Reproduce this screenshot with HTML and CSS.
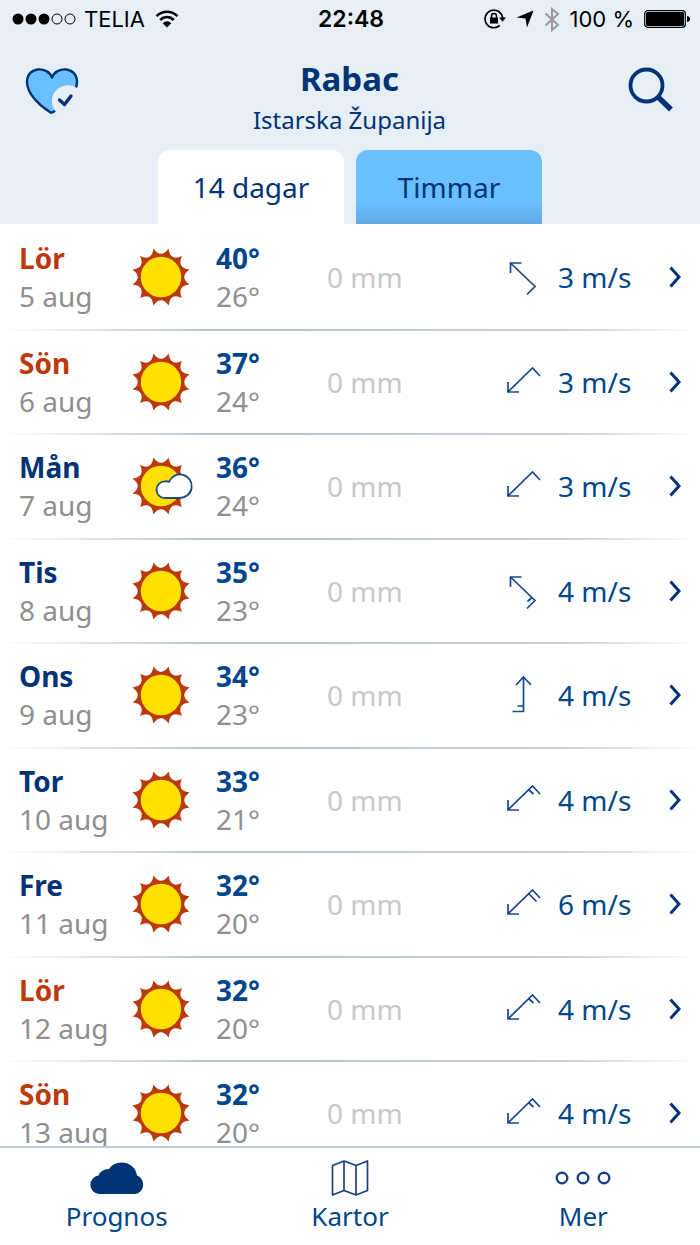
FILE: index.html
```html
<!DOCTYPE html>
<html lang="sv">

<head>
    <meta charset="UTF-8">
    <meta name="viewport" content="width=device-width, initial-scale=1.0">
    <title>Rabac - Prognos</title>
    <link rel="stylesheet" href="styles.css">
</head>

<body>
    <!-- Shared icons -->
    <svg class="sprite" aria-hidden="true">
        <symbol id="sun" viewBox="-30 -30 60 60">
            <path fill="#bb3a0b" d="M28.5 7.6Q15.6 9 20.9 20.9Q9 15.6 7.6 28.5Q0 18 -7.6 28.5Q-9 15.6 -20.9 20.9Q-15.6 9 -28.5 7.6Q-18 0 -28.5 -7.6Q-15.6 -9 -20.9 -20.9Q-9 -15.6 -7.6 -28.5Q0 -18 7.6 -28.5Q9 -15.6 20.9 -20.9Q15.6 -9 28.5 -7.6Q18 0 28.5 7.6Z"/>
            <circle r="20.2" fill="#ffe000"/>
        </symbol>
        <symbol id="wind-nw-3" viewBox="0 0 40 40">
            <path d="M7.5 16V6H18.5M7.5 6L32 29.5L24 37.5"/>
        </symbol>
        <symbol id="wind-nw-4" viewBox="0 0 40 40">
            <path d="M7.5 16V6H18.5M7.5 6L32 29.5L24 37.5M29 26.5L24.5 30.5"/>
        </symbol>
        <symbol id="wind-sw-3" viewBox="0 0 40 40">
            <path d="M5 20V30H16M5 30L29.5 6L37 14"/>
        </symbol>
        <symbol id="wind-sw-4" viewBox="0 0 40 40">
            <path d="M5 20V30H16M5 30L29.5 6L37 14M25.5 9.5L30.5 14"/>
        </symbol>
        <symbol id="wind-sw-6" viewBox="0 0 40 40">
            <path d="M5 20V30H16M5 30L29.5 6L37 14M25.5 9.5L33.5 17.5"/>
        </symbol>
        <symbol id="wind-n-4" viewBox="0 0 40 40">
            <path d="M13 10L20.5 2L28 10M20.5 2V36.5H9.5M20.5 31H14.5"/>
        </symbol>
        <symbol id="chevron" viewBox="0 0 14 24">
            <path d="M1.5 2.5L10 12L1.5 21.5"/>
        </symbol>
    </svg>

    <div class="app">
        <header class="top">
            <div class="status">
                <div class="status-left">
                    <svg width="64" height="12" viewBox="0 0 64 12" aria-hidden="true">
                        <circle cx="6" cy="6" r="5.5"/>
                        <circle cx="19" cy="6" r="5.5"/>
                        <circle cx="32" cy="6" r="5.5"/>
                        <circle cx="45" cy="6" r="5" fill="none" stroke="#000"/>
                        <circle cx="58" cy="6" r="5" fill="none" stroke="#000"/>
                    </svg>
                    <span>TELIA</span>
                    <svg width="24" height="18" viewBox="0 0 24 18" aria-hidden="true">
                        <path fill="none" stroke="#000" stroke-width="2.6" d="M1.5 6.2C7.5 .2 16.5 .2 22.5 6.2M5.2 10C9 6 15 6 18.8 10"/>
                        <path d="M12 17.5L7.7 13.2Q12 9.5 16.3 13.2Z"/>
                    </svg>
                </div>
                <time class="clock">22:48</time>
                <div class="status-right">
                    <svg width="22" height="20" viewBox="0 0 22 20" aria-hidden="true">
                        <path fill="none" stroke="#000" stroke-width="1.7" d="M15.7 16.5A8.8 8.8 0 1 1 18.6 9"/>
                        <path d="M15 8.5H22L18.5 12.7Z"/>
                        <rect x="6" y="8.5" width="8" height="6"/>
                        <path fill="none" stroke="#000" stroke-width="1.5" d="M7.5 9V7A2.5 2.5 0 0 1 12.5 7V9"/>
                    </svg>
                    <svg width="18" height="18" viewBox="0 0 18 18" aria-hidden="true">
                        <path d="M17.5 .5L11 17.5L9.5 8.5L.5 7.5Z"/>
                    </svg>
                    <svg width="16" height="25" viewBox="0 0 16 25" aria-hidden="true">
                        <path fill="none" stroke="#999" stroke-width="2" d="M1.5 6.5L14 18L8 23V2L14 7L1.5 18.5"/>
                    </svg>
                    <span>100 %</span>
                    <svg width="46" height="18" viewBox="0 0 46 18" aria-hidden="true">
                        <rect x=".7" y=".7" width="40.6" height="16.6" rx="3" fill="none" stroke="#000" stroke-width="1.2"/>
                        <rect x="2" y="2" width="38" height="14" rx="1.5"/>
                        <path d="M43 6Q46 6.5 46 9T43 12Z"/>
                    </svg>
                </div>
            </div>

            <div class="place">
                <button class="icon-button" type="button" aria-label="Favorit">
                    <svg width="54" height="48" viewBox="0 0 54 48">
                        <path fill="#69bfff" stroke="#003375" stroke-width="2.4" stroke-linejoin="round" d="M27 10.5C23 -1 2 -1 2 15C2 27 15 39 25.5 45.5Q27 46 29 44.5C40 37 52 27 52 15C52 -1 31 -1 27 10.5Z"/>
                        <path fill="#e6eff6" d="M54 22.5A13.5 13.500 0 1 0 32 46L54 46Z"/>
                        <path fill="none" stroke="#003375" stroke-width="3.4" stroke-linecap="round" stroke-linejoin="round" d="M34.5 33L39.5 37.5L46 29"/>
                    </svg>
                </button>
                <div class="place-name">
                    <h1>Rabac</h1>
                    <p>Istarska Županija</p>
                </div>
                <button class="icon-button search" type="button" aria-label="Sök">
                    <svg width="46" height="46" viewBox="0 0 46 46" fill="none" stroke="#003375">
                        <circle cx="18.5" cy="18.5" r="16" stroke-width="3.8"/>
                        <path stroke-width="5.4" d="M29.5 29.5L43 42.5"/>
                    </svg>
                </button>
            </div>

            <div class="tabs" role="tablist">
                <button class="tab active" type="button" role="tab" aria-selected="true">14 dagar</button>
                <button class="tab" type="button" role="tab" aria-selected="false">Timmar</button>
            </div>
        </header>

        <main class="forecast">
            <ul class="days">
                <li><a class="day" href="#">
                    <div class="date"><strong class="weekend">Lör</strong><span>5 aug</span></div>
                    <svg class="weather"><use href="#sun"/></svg>
                    <div class="temp"><strong>40°</strong><span>26°</span></div>
                    <span class="rain">0 mm</span>
                    <svg class="wind"><use href="#wind-nw-3"/></svg>
                    <span class="speed">3 m/s</span>
                    <svg class="chevron"><use href="#chevron"/></svg>
                </a></li>
                <li><a class="day" href="#">
                    <div class="date"><strong class="weekend">Sön</strong><span>6 aug</span></div>
                    <svg class="weather"><use href="#sun"/></svg>
                    <div class="temp"><strong>37°</strong><span>24°</span></div>
                    <span class="rain">0 mm</span>
                    <svg class="wind"><use href="#wind-sw-3"/></svg>
                    <span class="speed">3 m/s</span>
                    <svg class="chevron"><use href="#chevron"/></svg>
                </a></li>
                <li><a class="day" href="#">
                    <div class="date"><strong>Mån</strong><span>7 aug</span></div>
                    <svg class="weather" viewBox="-30 -30 60 60">
                        <use href="#sun" x="-30" y="-30" width="60" height="60"/>
                        <path fill="#fff" stroke="#1d4a8a" stroke-width="1.8" d="M3.8 12A8.3 8.3 0 0 1 3.8 -4.6Q6 -5 8 -4.2A11.8 11.8 0 1 1 18.5 12Z"/>
                    </svg>
                    <div class="temp"><strong>36°</strong><span>24°</span></div>
                    <span class="rain">0 mm</span>
                    <svg class="wind"><use href="#wind-sw-3"/></svg>
                    <span class="speed">3 m/s</span>
                    <svg class="chevron"><use href="#chevron"/></svg>
                </a></li>
                <li><a class="day" href="#">
                    <div class="date"><strong>Tis</strong><span>8 aug</span></div>
                    <svg class="weather"><use href="#sun"/></svg>
                    <div class="temp"><strong>35°</strong><span>23°</span></div>
                    <span class="rain">0 mm</span>
                    <svg class="wind"><use href="#wind-nw-4"/></svg>
                    <span class="speed">4 m/s</span>
                    <svg class="chevron"><use href="#chevron"/></svg>
                </a></li>
                <li><a class="day" href="#">
                    <div class="date"><strong>Ons</strong><span>9 aug</span></div>
                    <svg class="weather"><use href="#sun"/></svg>
                    <div class="temp"><strong>34°</strong><span>23°</span></div>
                    <span class="rain">0 mm</span>
                    <svg class="wind"><use href="#wind-n-4"/></svg>
                    <span class="speed">4 m/s</span>
                    <svg class="chevron"><use href="#chevron"/></svg>
                </a></li>
                <li><a class="day" href="#">
                    <div class="date"><strong>Tor</strong><span>10 aug</span></div>
                    <svg class="weather"><use href="#sun"/></svg>
                    <div class="temp"><strong>33°</strong><span>21°</span></div>
                    <span class="rain">0 mm</span>
                    <svg class="wind"><use href="#wind-sw-4"/></svg>
                    <span class="speed">4 m/s</span>
                    <svg class="chevron"><use href="#chevron"/></svg>
                </a></li>
                <li><a class="day" href="#">
                    <div class="date"><strong>Fre</strong><span>11 aug</span></div>
                    <svg class="weather"><use href="#sun"/></svg>
                    <div class="temp"><strong>32°</strong><span>20°</span></div>
                    <span class="rain">0 mm</span>
                    <svg class="wind"><use href="#wind-sw-6"/></svg>
                    <span class="speed">6 m/s</span>
                    <svg class="chevron"><use href="#chevron"/></svg>
                </a></li>
                <li><a class="day" href="#">
                    <div class="date"><strong class="weekend">Lör</strong><span>12 aug</span></div>
                    <svg class="weather"><use href="#sun"/></svg>
                    <div class="temp"><strong>32°</strong><span>20°</span></div>
                    <span class="rain">0 mm</span>
                    <svg class="wind"><use href="#wind-sw-4"/></svg>
                    <span class="speed">4 m/s</span>
                    <svg class="chevron"><use href="#chevron"/></svg>
                </a></li>
                <li><a class="day" href="#">
                    <div class="date"><strong class="weekend">Sön</strong><span>13 aug</span></div>
                    <svg class="weather"><use href="#sun"/></svg>
                    <div class="temp"><strong>32°</strong><span>20°</span></div>
                    <span class="rain">0 mm</span>
                    <svg class="wind"><use href="#wind-sw-4"/></svg>
                    <span class="speed">4 m/s</span>
                    <svg class="chevron"><use href="#chevron"/></svg>
                </a></li>
            </ul>
        </main>

        <nav class="bottom-nav">
            <a href="#">
                <svg width="54" height="36" viewBox="0 0 54 36">
                    <path fill="#003375" d="M9 34A9.3 9.3 0 0 1 8.5 15.5Q11 9 19 9Q23 2.5 31.5 2.5C40 2.5 46 8 47 15.5A9.6 9.6 0 0 1 45 34Z"/>
                </svg>
                <span>Prognos</span>
            </a>
            <a href="#">
                <svg width="38" height="36" viewBox="0 0 38 36" fill="none" stroke="#1a3f7c" stroke-width="1.7" stroke-linejoin="round">
                    <path d="M1.5 5.5L13 1L25 5.5L36.5 1V30.5L25 35L13 30.5L1.5 35ZM13 1V30.5M25 5.5V35"/>
                </svg>
                <span>Kartor</span>
            </a>
            <a href="#">
                <svg width="56" height="36" viewBox="0 0 56 36" fill="none" stroke="#1a4282" stroke-width="2.4">
                    <circle cx="7" cy="18" r="5.3"/>
                    <circle cx="28" cy="18" r="5.3"/>
                    <circle cx="49" cy="18" r="5.3"/>
                </svg>
                <span>Mer</span>
            </a>
        </nav>
    </div>
</body>

</html>
```

FILE: styles.css
```css
* {
    box-sizing: border-box;
}

body {
    margin: 0;
    font-family: "Noto Sans", sans-serif;
    font-size: 28px;
    color: #003375;
    background: #fff;
}

a {
    color: inherit;
    text-decoration: none;
}

button {
    font: inherit;
    color: inherit;
    border: none;
    padding: 0;
    cursor: pointer;
}

svg {
    display: block;
    flex: none;
}

.sprite {
    position: absolute;
    width: 0;
    height: 0;
}

.app {
    display: flex;
    flex-direction: column;
    height: 100vh;
}

/* Header */
.top {
    background: #e6eff6;
}

.status {
    display: grid;
    grid-template-columns: 1fr auto 1fr;
    align-items: center;
    height: 38px;
    padding: 0 10px 0 12px;
    font-family: Inter, "Liberation Sans", sans-serif;
    font-size: 22px;
    color: #000;
}

.status-left,
.status-right {
    display: flex;
    align-items: center;
    gap: 8px;
}

.status-left span {
    margin-right: 2px;
}

.status-right {
    justify-content: flex-end;
    gap: 10px;
}

.clock {
    font-size: 23px;
    font-weight: 600;
}

.place {
    display: grid;
    grid-template-columns: 1fr auto 1fr;
    align-items: start;
    padding: 18px 26px 12px 25px;
}

.icon-button {
    justify-self: start;
    margin-top: 11px;
    background: none;
}

.icon-button.search {
    justify-self: end;
}

.place-name {
    text-align: center;
}

.place-name h1 {
    margin: 0;
    font-size: 33px;
    line-height: 46px;
}

.place-name p {
    margin: 0;
    font-size: 24px;
    line-height: 36px;
}

.tabs {
    display: flex;
    justify-content: center;
    gap: 12px;
}

.tab {
    width: 186px;
    height: 74px;
    border-radius: 12px 12px 0 0;
    background: linear-gradient(#69bfff 72%, #5fa9e4);
}

.tab.active {
    background: #fff;
}

/* Day list */
.forecast {
    flex: 1;
    min-height: 0;
    overflow-y: auto;
    scrollbar-width: none;
}

.days {
    list-style: none;
    margin: 0;
    padding: 2px 0 0;
}

.day {
    display: grid;
    grid-template-columns: 112px 85px 111px 1fr 55px 111px 14px;
    align-items: center;
    height: 105px;
    padding: 0 17px 3px 19px;
    background: linear-gradient(90deg, #fff, #b9c4cd 30%, #c9ced6 80%, #fff) bottom / 100% 2px no-repeat;
}

li:nth-child(even) .day {
    height: 104px;
}

.date,
.temp {
    display: flex;
    flex-direction: column;
    line-height: 38px;
    color: #8f8f8f;
}

.date strong {
    color: #003375;
}

.date .weekend {
    color: #bb3a0b;
}

.temp strong {
    color: #00468c;
}

.weather {
    width: 60px;
    height: 60px;
    overflow: visible;
}

.rain {
    color: #c8c8c8;
}

.wind {
    width: 40px;
    height: 40px;
    fill: none;
    stroke: #17488f;
    stroke-width: 1.7;
}

.speed {
    color: #00468c;
}

.chevron {
    width: 14px;
    height: 24px;
    fill: none;
    stroke: #003375;
    stroke-width: 3px;
}

/* Bottom navigation */
.bottom-nav {
    display: grid;
    grid-template-columns: repeat(3, 1fr);
    border-top: 2px solid #bccbdc;
    padding: 12px 0 10px;
    background: #fff;
}

.bottom-nav a {
    display: flex;
    flex-direction: column;
    align-items: center;
    gap: 1px;
    font-size: 26px;
    line-height: 38px;
    color: #00468c;
}
```
